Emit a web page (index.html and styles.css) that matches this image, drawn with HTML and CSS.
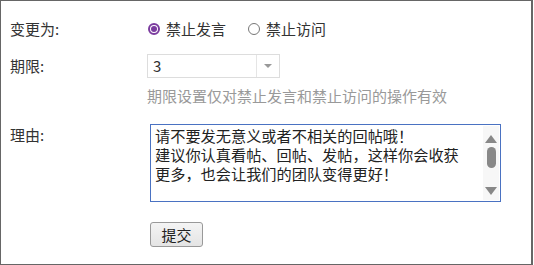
FILE: index.html
```html
<!DOCTYPE html>
<html lang="zh">
<head>
<meta charset="utf-8">
<link rel="stylesheet" href="styles.css">
</head>
<body>
<div class="frame">
  <div class="row row-type">
    <div class="label">变更为:</div>
    <div class="field radios">
      <label class="radio"><span class="dot checked"></span><span>禁止发言</span></label>
      <label class="radio"><span class="dot"></span><span>禁止访问</span></label>
    </div>
  </div>
  <div class="row row-period">
    <div class="label">期限:</div>
    <div class="field">
      <div class="select"><span class="select-value">3</span><span class="select-arrow"><span class="tri"></span></span></div>
      <div class="hint">期限设置仅对禁止发言和禁止访问的操作有效</div>
    </div>
  </div>
  <div class="row row-reason">
    <div class="label">理由:</div>
    <div class="field">
      <div class="textarea">
        <div class="ta-text">请不要发无意义或者不相关的回帖哦！<br>建议你认真看帖、回帖、发帖，这样你会收获<br>更多，也会让我们的团队变得更好！</div>
        <div class="scrollbar">
          <span class="arr up"></span>
          <span class="track"><span class="thumb"></span></span>
          <span class="arr down"></span>
        </div>
      </div>
    </div>
  </div>
  <div class="row row-submit">
    <div class="label"></div>
    <div class="field">
      <button class="btn">提交</button>
    </div>
  </div>
</div>
</body>
</html>
```
FILE: styles.css
```css
html, body {
  margin: 0;
  padding: 0;
  background: #fff;
}
body {
  font-family: "Noto Sans CJK SC", "Noto Sans", sans-serif;
  color: #333;
  font-size: 15px;
}
.frame {
  width: 533px;
  height: 265px;
  box-sizing: border-box;
  border: 1px solid #666;
  border-right-width: 2px;
  padding: 17px 0 0 9px;
}
.row {
  display: flex;
  align-items: flex-start;
}
.label {
  width: 137px;
  flex: none;
  line-height: 22px;
}
.field {
  display: flex;
  flex-direction: column;
}
.radios {
  flex-direction: row;
  gap: 21px;
}
.radio {
  display: flex;
  align-items: center;
  gap: 6px;
  line-height: 22px;
}
.dot {
  width: 12px;
  height: 12px;
  border: 1px solid #777;
  border-radius: 50%;
  box-sizing: border-box;
  display: flex;
  align-items: center;
  justify-content: center;
  margin-left: 1px;
}
.dot.checked {
  border: 2px solid #7b3c9f;
}
.dot.checked::after {
  content: "";
  width: 6px;
  height: 6px;
  border-radius: 50%;
  background: #7b3c9f;
}
.row-period {
  margin-top: 14px;
}
.row-period .label {
  line-height: 24px;
}
.select {
  width: 133px;
  height: 24px;
  box-sizing: border-box;
  border: 1px solid #ddd;
  display: flex;
}
.select-value {
  flex: 1;
  padding-left: 5px;
  line-height: 22px;
}
.select-arrow {
  width: 22px;
  border-left: 1px solid #e5e5e5;
  display: flex;
  align-items: center;
  justify-content: center;
}
.tri {
  width: 0;
  height: 0;
  border-left: 4px solid transparent;
  border-right: 4px solid transparent;
  border-top: 4px solid #999;
}
.hint {
  color: #999;
  margin-top: 7px;
  line-height: 22px;
}
.row-reason {
  margin-top: 17px;
}
.row-reason .label {
  line-height: 22px;
}
.row-reason .field,
.row-submit .field {
  padding-left: 3px;
}
.textarea {
  width: 351px;
  height: 78px;
  box-sizing: border-box;
  border: 1px solid #4a72c2;
  display: flex;
  color: #222;
  font-size: 15.2px;
}
.ta-text {
  flex: 1;
  padding: 1px 0 0 4px;
  line-height: 19px;
  white-space: nowrap;
}
.scrollbar {
  width: 16px;
  margin: 1px 1px 1px 0;
  background: #f7f7f7;
  display: flex;
  flex-direction: column;
  align-items: center;
}
.arr {
  width: 0;
  height: 0;
  border-left: 6px solid transparent;
  border-right: 6px solid transparent;
}
.arr.up {
  border-bottom: 8px solid #888;
  margin-top: 9px;
}
.arr.down {
  border-top: 8px solid #888;
  margin-bottom: 5px;
}
.track {
  flex: 1;
  display: flex;
  justify-content: center;
  padding-top: 4px;
}
.thumb {
  width: 9px;
  height: 21px;
  background: #888;
  border-radius: 5px;
}
.row-submit {
  margin-top: 20px;
}
.btn {
  width: 53px;
  height: 25px;
  padding: 0;
  font-family: "Noto Sans CJK SC", sans-serif;
  font-size: 15px;
  color: #222;
  border: 1px solid #999;
  border-radius: 3px;
  background: linear-gradient(#f4f4f4, #e4e4e4);
  line-height: 22px;
}
```
